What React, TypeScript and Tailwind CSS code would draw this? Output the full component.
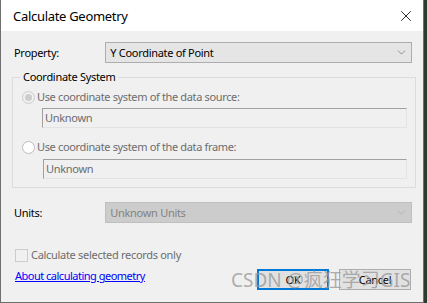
import { X, ChevronDown } from "lucide-react";

const font = { fontFamily: '"Noto Sans", "Liberation Sans", "Noto Sans CJK SC", sans-serif' };

function Select({ value, disabled }: { value: string; disabled?: boolean }) {
  return (
    <div
      className={
        "flex items-center justify-between w-[309px] h-[21px] border pl-[4px] pr-[3px] " +
        (disabled
          ? "bg-[#cccccc] border-[#bfbfbf] text-[#838383]"
          : "bg-[#e5e5e5] border-[#adadad] text-[#000000]")
      }
    >
      <span>{value}</span>
      <ChevronDown
        size={13}
        strokeWidth={1.2}
        className={disabled ? "text-[#a6a6a6]" : "text-[#606060]"}
      />
    </div>
  );
}

function Textbox({ value, width }: { value: string; width: string }) {
  return (
    <div
      className={
        "h-[20px] border border-t-[#a0a0a0] border-l-[#a0a0a0] border-b-[#e3e3e3] border-r-[#e3e3e3] pl-[2px] flex items-center text-[#6d6d6d] " +
        width
      }
    >
      {value}
    </div>
  );
}

function Radio({ checked, label }: { checked?: boolean; label: string }) {
  return (
    <div className="flex items-center h-[14px] ml-[2px]">
      <div
        className={
          "w-[13px] h-[13px] rounded-full border flex items-center justify-center " +
          (checked ? "border-[#cccccc] bg-[#f0f0f0]" : "border-[#bcbcbc] bg-white")
        }
      >
        {checked && <div className="w-[7px] h-[7px] rounded-full bg-[#cccccc]" />}
      </div>
      <span className="ml-[2px] text-[#6d6d6d] tracking-[-0.35px]">{label}</span>
    </div>
  );
}

export default function App() {
  return (
    <div
      className="w-[427px] h-[303px] bg-[#2f3b2e] text-[11px] leading-[16px] tracking-[-0.3px]"
      style={font}
    >
      <div className="relative w-[424px] h-[303px] border border-t-0 border-[#6f6f6f] bg-[#f0f0f0] flex flex-col overflow-hidden">
        {/* title bar */}
        <div className="h-[31px] bg-white flex items-center justify-between pl-[12px] pr-[8px] shrink-0">
          <span className="text-[13px] text-black tracking-[-0.3px]">Calculate Geometry</span>
          <X size={18} strokeWidth={1.1} className="text-black" />
        </div>

        <div className="flex flex-col px-[11px]">
          <div className="flex items-center mt-[11px] pl-[2px]">
            <span className="w-[92px]">Property:</span>
            <Select value="Y Coordinate of Point" />
          </div>

          <fieldset className="mt-[6px] w-[404px] border border-[#dcdcdc] pl-[7px] pb-[8px]">
            <legend className="px-[3px] text-black">Coordinate System</legend>
            <div className="mt-[5px]">
              <Radio checked label="Use coordinate system of the data source:" />
            </div>
            <div className="mt-[4px] ml-[22px]">
              <Textbox value="Unknown" width="w-[365px]" />
            </div>
            <div className="mt-[12px]">
              <Radio label="Use coordinate system of the data frame:" />
            </div>
            <div className="mt-[5px] ml-[23px]">
              <Textbox value="Unknown" width="w-[364px]" />
            </div>
          </fieldset>

          <div className="flex items-center mt-[14px] pl-[2px]">
            <span className="w-[92px]">Units:</span>
            <Select value="Unknown Units" disabled />
          </div>

          <div className="flex items-center mt-[24px] pl-[3px]">
            <div className="w-[13px] h-[13px] border border-[#cccccc] bg-[#f0f0f0]" />
            <span className="ml-[3px] text-[#6d6d6d]">Calculate selected records only</span>
          </div>

          <div className="flex items-start justify-between mt-[5px] pl-[3px] pr-[1px]">
            <a className="text-[#0000ff] underline underline-offset-1 tracking-[-0.5px]">
              About calculating geometry
            </a>
            <div className="flex gap-[10px] mt-[1px]">
              <button className="w-[72px] h-[21px] border-2 border-[#0078d7] bg-[#e1e1e1] text-black">
                OK
              </button>
              <button className="w-[72px] h-[21px] border border-[#adadad] bg-[#e1e1e1] text-black">
                Cancel
              </button>
            </div>
          </div>
        </div>

        {/* watermark */}
        <div className="absolute left-[230px] top-[269px] text-[19px] leading-[22px] tracking-normal text-[#9a9a9a]/80 whitespace-nowrap pointer-events-none">
          CSDN @疯狂学习GIS
        </div>
      </div>
    </div>
  );
}
